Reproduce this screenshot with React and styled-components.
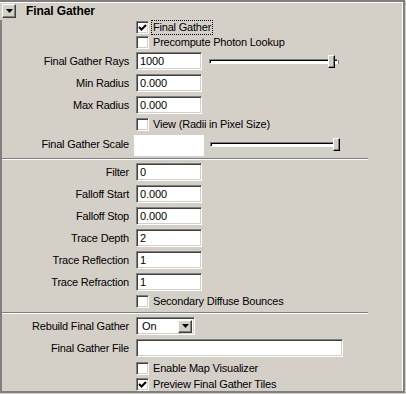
import React from "react";
import styled, { createGlobalStyle } from "styled-components";

const Global = createGlobalStyle`
  html, body { margin: 0; padding: 0; background: #d4d0c8; }
  body { font-family: "Liberation Sans", Arial, sans-serif; font-size: 11px; color: #000; }
`;

const Frame = styled.div`
  width: 405px;
  height: 393px;
  box-sizing: border-box;
  background: #d4d0c8;
  border-top: 2px solid #808080;
  border-right: 2px solid #808080;
  border-bottom: 2px solid #808080;
  box-shadow: inset -1px 1px 0 #fff;
  display: flex;
  flex-direction: column;
`;

const Header = styled.div`
  height: 18px;
  display: flex;
  align-items: center;
  gap: 10px;
  padding-left: 2px;
`;

const CollapseBtn = styled.div`
  width: 14px;
  height: 14px;
  box-sizing: border-box;
  border: 1px solid;
  border-color: #fff #404040 #404040 #fff;
  box-shadow: inset -1px -1px 0 #808080;
  display: flex;
  align-items: center;
  justify-content: center;
`;

const Title = styled.div`
  font-weight: bold;
  font-size: 12px;
  letter-spacing: -0.1px;
`;

const Body = styled.div`
  flex: 1;
  border-left: 2px solid #808080;
  display: flex;
  flex-direction: column;
`;

const Row = styled.div`
  height: ${(p) => p.$h}px;
  display: grid;
  grid-template-columns: 127px auto;
  column-gap: 7px;
  align-items: center;
  justify-content: start;
`;

const Label = styled.div`
  text-align: right;
  white-space: nowrap;
  letter-spacing: -0.2px;
`;

const Field = styled.div`
  display: flex;
  align-items: center;
  gap: 7px;
`;

const Input = styled.div`
  width: ${(p) => p.$w}px;
  height: 18px;
  box-sizing: border-box;
  background: #fff;
  border: 1px solid;
  border-color: #808080 #fff #fff #808080;
  box-shadow: inset 1px 1px 0 #404040, inset -1px -1px 0 #d4d0c8;
  padding-left: 3px;
  display: flex;
  align-items: center;
  letter-spacing: -0.1px;
`;

const FlatBox = styled.div`
  width: 70px;
  height: 21px;
  background: #fff;
  margin-left: -2px;
  margin-top: 2px;
`;

const Slider = styled.div`
  position: relative;
  width: 129px;
  height: 13px;
  display: flex;
  align-items: center;
  margin-left: ${(p) => p.$ml || 0}px;
`;

const Track = styled.div`
  width: 100%;
  height: 5px;
  box-sizing: border-box;
  background: #fff;
  border: 1px solid;
  border-color: #808080 #fff #fff #808080;
  box-shadow: inset 1px 1px 0 #000;
`;

const Thumb = styled.div`
  position: absolute;
  left: ${(p) => p.$x}px;
  top: 0;
  width: 7px;
  height: 13px;
  box-sizing: border-box;
  background: #d4d0c8;
  border: 1px solid;
  border-color: #fff #000 #000 #fff;
  box-shadow: inset -1px -1px 0 #808080;
`;

const Tick = styled.div`
  position: absolute;
  right: -1px;
  top: 5px;
  width: 1px;
  height: 4px;
  background: #808080;
`;

const CheckWrap = styled.div`
  display: flex;
  align-items: center;
  gap: 2px;
`;

const Box = styled.div`
  width: 13px;
  height: 13px;
  box-sizing: border-box;
  background: #fff;
  border: 1px solid;
  border-color: #808080 #fff #fff #808080;
  box-shadow: inset 1px 1px 0 #404040, inset -1px -1px 0 #d4d0c8;
  display: flex;
  align-items: center;
  justify-content: center;
`;

const CheckText = styled.span`
  padding: 0 1px;
  line-height: 13px;
  letter-spacing: -0.2px;
  outline: ${(p) => (p.$focus ? "1px dotted #000" : "none")};
  outline-offset: 0;
  margin-left: 1px;
  white-space: nowrap;
`;

const Separator = styled.div`
  width: 366px;
  height: 1px;
  background: #808080;
  border-bottom: 1px solid #fff;
  margin-top: ${(p) => p.$mt}px;
  margin-bottom: ${(p) => p.$mb}px;
`;

const Select = styled.div`
  width: 59px;
  height: 18px;
  box-sizing: border-box;
  background: #fff;
  border: 1px solid;
  border-color: #808080 #fff #fff #808080;
  box-shadow: inset 1px 1px 0 #404040, inset -1px -1px 0 #d4d0c8;
  display: flex;
  align-items: center;
  justify-content: space-between;
  padding: 2px 2px 2px 5px;
`;

const SelectBtn = styled.div`
  width: 14px;
  height: 13px;
  box-sizing: border-box;
  background: #d4d0c8;
  border: 1px solid;
  border-color: #fff #404040 #404040 #fff;
  box-shadow: inset -1px -1px 0 #808080;
  display: flex;
  align-items: center;
  justify-content: center;
`;

const Arrow = () => (
  <svg width="7" height="4" viewBox="0 0 7 4">
    <path d="M0 0H7L3.5 4Z" fill="#000" />
  </svg>
);

const Check = () => (
  <svg width="9" height="9" viewBox="0 0 9 9">
    <path d="M1 4 L3.5 6.5 L8 2" stroke="#000" strokeWidth="2" fill="none" />
  </svg>
);

const CheckRow = ({ h, label, checked, focus }) => (
  <Row $h={h}>
    <span />
    <CheckWrap>
      <Box>{checked && <Check />}</Box>
      <CheckText $focus={focus}>{label}</CheckText>
    </CheckWrap>
  </Row>
);

const FieldRow = ({ label, value, slider, thumb }) => (
  <Row $h={22}>
    <Label>{label}</Label>
    <Field>
      <Input $w={66}>{value}</Input>
      {slider && (
        <Slider>
          <Track />
          <Thumb $x={thumb} />
          <Tick />
        </Slider>
      )}
    </Field>
  </Row>
);

export default function App() {
  return (
    <>
      <Global />
      <Frame>
        <Header>
          <CollapseBtn>
            <Arrow />
          </CollapseBtn>
          <Title>Final Gather</Title>
        </Header>
        <Body>
          <CheckRow h={14} label="Final Gather" checked focus />
          <CheckRow h={16} label="Precompute Photon Lookup" />
          <FieldRow label="Final Gather Rays" value="1000" slider thumb={119} />
          <FieldRow label="Min Radius" value="0.000" />
          <FieldRow label="Max Radius" value="0.000" />
          <CheckRow h={16} label="View (Radii in Pixel Size)" />
          <Row $h={24}>
            <Label>Final Gather Scale</Label>
            <Field>
              <FlatBox />
              <Slider $ml={-1}>
                <Track />
                <Thumb $x={123} />
              </Slider>
            </Field>
          </Row>
          <Separator $mt={2} $mb={1} />
          <FieldRow label="Filter" value="0" />
          <FieldRow label="Falloff Start" value="0.000" />
          <FieldRow label="Falloff Stop" value="0.000" />
          <FieldRow label="Trace Depth" value="2" />
          <FieldRow label="Trace Reflection" value="1" />
          <FieldRow label="Trace Refraction" value="1" />
          <CheckRow h={16} label="Secondary Diffuse Bounces" />
          <Separator $mt={3} $mb={1} />
          <Row $h={22}>
            <Label>Rebuild Final Gather</Label>
            <Select>
              <span>On</span>
              <SelectBtn>
                <Arrow />
              </SelectBtn>
            </Select>
          </Row>
          <Row $h={22}>
            <Label>Final Gather File</Label>
            <Input $w={207} />
          </Row>
          <CheckRow h={19} label="Enable Map Visualizer" />
          <CheckRow h={13} label="Preview Final Gather Tiles" checked />
        </Body>
      </Frame>
    </>
  );
}
